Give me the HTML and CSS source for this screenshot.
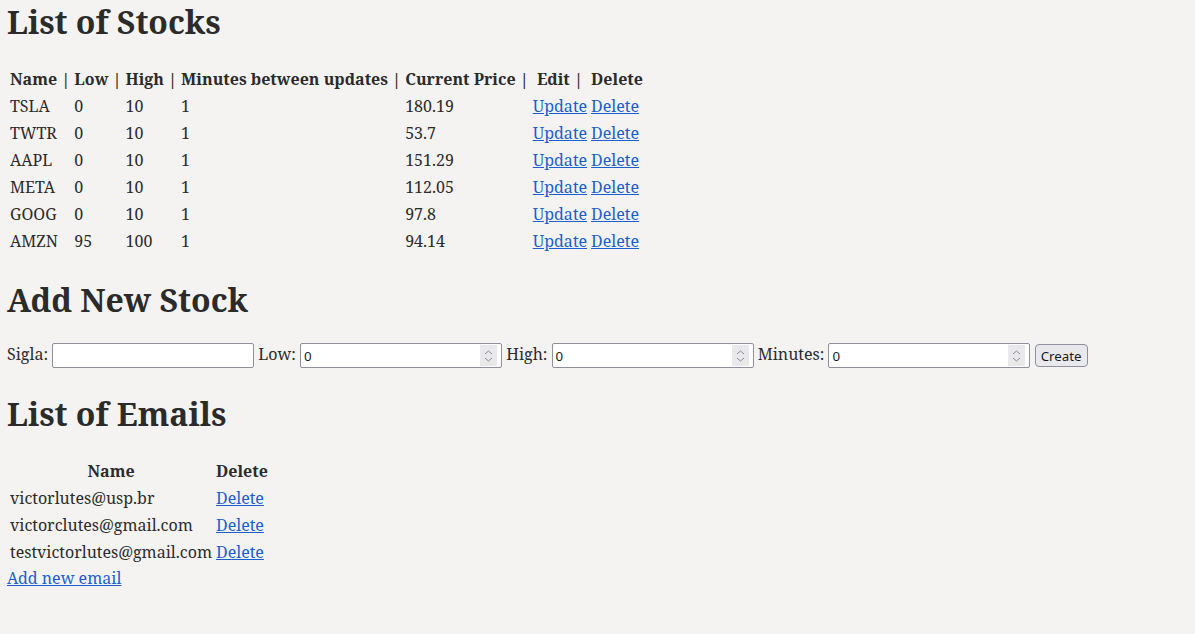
FILE: index.html
```html
<!DOCTYPE html>
<html>
<head>
<meta charset="utf-8">
<link rel="stylesheet" href="styles.css">
</head>
<body>
<h1>List of Stocks</h1>
<table class="stocks">
<thead>
<tr><th>Name |</th><th>Low |</th><th>High |</th><th>Minutes between updates |</th><th>Current Price |</th><th>&nbsp;Edit |</th><th>Delete</th></tr>
</thead>
<tbody>
<tr><td>TSLA</td><td>0</td><td>10</td><td>1</td><td>180.19</td><td><a href="#">Update</a></td><td><a href="#">Delete</a></td></tr>
<tr><td>TWTR</td><td>0</td><td>10</td><td>1</td><td>53.7</td><td><a href="#">Update</a></td><td><a href="#">Delete</a></td></tr>
<tr><td>AAPL</td><td>0</td><td>10</td><td>1</td><td>151.29</td><td><a href="#">Update</a></td><td><a href="#">Delete</a></td></tr>
<tr><td>META</td><td>0</td><td>10</td><td>1</td><td>112.05</td><td><a href="#">Update</a></td><td><a href="#">Delete</a></td></tr>
<tr><td>GOOG</td><td>0</td><td>10</td><td>1</td><td>97.8</td><td><a href="#">Update</a></td><td><a href="#">Delete</a></td></tr>
<tr><td>AMZN</td><td>95</td><td>100</td><td>1</td><td>94.14</td><td><a href="#">Update</a></td><td><a href="#">Delete</a></td></tr>
</tbody>
</table>
<h1>Add New Stock</h1>
<form class="add">
<label>Sigla: <input type="text"></label>
<label>Low: <span class="num"><input type="number" value="0"><span class="spin"><svg width="9" height="14" viewBox="0 0 9 14"><path d="M1 5 L4.5 2 L8 5 M1 9 L4.5 12 L8 9" fill="none" stroke="#8a8a90" stroke-width="1"/></svg></span></span></label>
<label>High: <span class="num"><input type="number" value="0"><span class="spin"><svg width="9" height="14" viewBox="0 0 9 14"><path d="M1 5 L4.5 2 L8 5 M1 9 L4.5 12 L8 9" fill="none" stroke="#8a8a90" stroke-width="1"/></svg></span></span></label>
<label>Minutes: <span class="num"><input type="number" value="0"><span class="spin"><svg width="9" height="14" viewBox="0 0 9 14"><path d="M1 5 L4.5 2 L8 5 M1 9 L4.5 12 L8 9" fill="none" stroke="#8a8a90" stroke-width="1"/></svg></span></span></label>
<button type="button">Create</button>
</form>
<h1>List of Emails</h1>
<table class="emails">
<thead><tr><th>Name</th><th>Delete</th></tr></thead>
<tbody>
<tr><td>victorlutes@usp.br</td><td><a href="#">Delete</a></td></tr>
<tr><td>victorclutes@gmail.com</td><td><a href="#">Delete</a></td></tr>
<tr><td>testvictorlutes@gmail.com</td><td><a href="#">Delete</a></td></tr>
</tbody>
</table>
<a href="#">Add new email</a>
</body>
</html>
```
FILE: styles.css
```css
html { background: #f5f3f2; }
body {
  margin: 0;
  padding: 0 7px;
  font-family: "Noto Serif", "DejaVu Serif", serif;
  color: #2b2b2b;
  font-size: 16px;
  line-height: 23px;
}
h1 {
  font-size: 32px;
  line-height: 44px;
  margin: 22px 0 21px;
}
h1:first-child { margin-top: 0; }
table { border-spacing: 2px; }
th, td { padding: 1px; line-height: 23px; }
.stocks th { text-align: left; }
a { color: #1a5fd0; }
.add { margin: 0; height: 27px; }
.add input {
  font-family: "Noto Sans", sans-serif;
  font-size: 13.33px;
  color: #1a1a1a;
  width: 202px;
  height: 25px;
  box-sizing: border-box;
  border: 1px solid #8f8f9d;
  border-radius: 2px;
  background: #fff;
  padding: 1px 3px;
  margin: 0;
  vertical-align: middle;
  -moz-appearance: textfield;
  appearance: textfield;
}
.add input::-webkit-inner-spin-button,
.add input::-webkit-outer-spin-button { -webkit-appearance: none; display: none; margin: 0; }
.num { position: relative; display: inline-block; vertical-align: middle; height: 25px; }
.num input { vertical-align: top; }
.spin {
  position: absolute;
  right: 5px;
  top: 2px;
  width: 17px;
  height: 21px;
  background: #e9e9ed;
  display: flex;
  align-items: center;
  justify-content: center;
}
.spin svg { display: block; }
.add button {
  font-family: "Noto Sans", sans-serif;
  font-size: 13.33px;
  height: 23px;
  padding: 0 5px;
  border: 1px solid #8f8f9d;
  border-radius: 4px;
  background: #e9e9ed;
  color: #1a1a1a;
  margin-left: 0;
  vertical-align: middle;
}
```
